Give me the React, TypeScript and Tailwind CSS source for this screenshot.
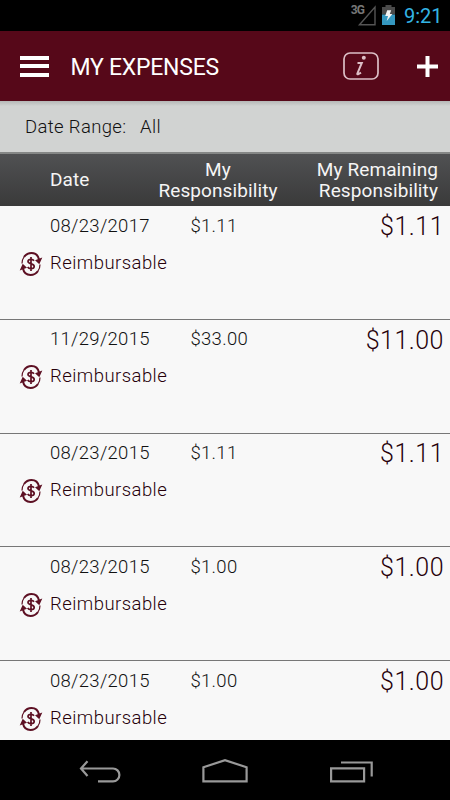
import React from "react";

const expenses = [
  { date: "08/23/2017", mine: "$1.11", remaining: "$1.11" },
  { date: "11/29/2015", mine: "$33.00", remaining: "$11.00" },
  { date: "08/23/2015", mine: "$1.11", remaining: "$1.11" },
  { date: "08/23/2015", mine: "$1.00", remaining: "$1.00" },
  { date: "08/23/2015", mine: "$1.00", remaining: "$1.00" },
];

function StatusBar() {
  return (
    <div className="flex h-[31px] shrink-0 items-start justify-end bg-black">
      <span className="mt-[5px] text-[12px] leading-[11px] font-bold tracking-[-0.9px] text-[#777]">3G</span>
      <svg className="-ml-[7px] mt-[4px] h-[22px] w-[20px]" viewBox="0 0 20 22" fill="none" stroke="#555" strokeWidth="1.4">
        <path d="M2.5 20.7 18 3v17.700z" />
      </svg>
      <svg className="ml-[5px] mt-[5px] h-[21px] w-[13px]" viewBox="0 0 13 21">
        <path d="M3.5 0h6v2H13v7.500H0V2h3.500z" fill="#4a4a4a" />
        <path d="M0 9.500h13V20H0z" fill="#3497bf" />
        <path d="M5.200 5.200h4L7.800 9h2.600L4.700 16l1.300-5H3.200z" fill="#f4f4f4" />
      </svg>
      <span className="ml-[9px] mr-[8px] mt-[4px] w-[38px] whitespace-nowrap text-[20px] leading-[24px] text-[#33b5e5]">9:21</span>
    </div>
  );
}

function RefundIcon() {
  return (
    <svg className="h-[26px] w-[24px]" viewBox="0 0 24 26" fill="none" stroke="#5d1023">
      <path d="M5 6C7 3.200 9.500 2 12.500 2c4 0 6.700 2.500 7.500 6.500" strokeWidth="2" />
      <path d="M5 6C3.500 8 3 10 3 12.500" strokeWidth="1.200" />
      <path d="M19 20c-2 2.800-4.500 4-7.500 4-4 0-6.700-2.500-7.500-6.500" strokeWidth="2" />
      <path d="M19 20c1.500-2 2-4 2-6.500" strokeWidth="1.200" />
      <path d="m16 9.300 7.300-2.800-3 6.700zM8 16.700.7 19.500l3-6.700z" fill="#5d1023" stroke="none" />
      <path d="M15 9.800c-.6-1-1.700-1.500-3-1.500-1.800 0-3 .9-3 2.200 0 3 6.200 1.700 6.200 4.800 0 1.400-1.300 2.400-3.200 2.400-1.500 0-2.700-.6-3.300-1.700M12 6v14" strokeWidth="1.700" />
    </svg>
  );
}

function ExpenseRow({ date, mine, remaining }: (typeof expenses)[number]) {
  return (
    <div className="h-[113.75px] shrink-0 border-b border-[#777]">
      <div className="flex h-[41px] items-center text-[18.500px] font-[350] tracking-[0.3px] text-[#111]">
        <span className="ml-[50px] w-[140.500px]">{date}</span>
        <span>{mine}</span>
        <span className="ml-auto mr-[6px] text-[25px] tracking-[0.5px] text-[#26000a]">{remaining}</span>
      </div>
      <div className="flex h-[33px] items-center">
        <div className="ml-[19px]"><RefundIcon /></div>
        <span className="ml-[7px] text-[18.500px] font-[350] tracking-[0.45px] text-[#26000a]">Reimbursable</span>
      </div>
    </div>
  );
}

function NavigationBar() {
  return (
    <div className="flex h-[60px] shrink-0 items-center bg-black pl-[78px]">
      <svg className="h-[28px] w-[44px]" viewBox="0 0 44 28" fill="none" stroke="#999" strokeWidth="2.200">
        <path d="M2.500 12.500H35a6.400 6.400 0 0 1 0 12.800H20M9.500 5.200 3 12.500 9.500 20" />
      </svg>
      <svg className="ml-[79px] h-[28px] w-[48px]" viewBox="0 0 48 28" fill="none" stroke="#999" strokeWidth="2.200">
        <path d="M2.400 11.300 24 4.200l21.600 7.100v14H2.400z" />
      </svg>
      <svg className="ml-[80px] h-[28px] w-[46px]" viewBox="0 0 46 28" fill="none" stroke="#999" strokeWidth="2.200">
        <path d="M2.100 12.400h33v12.900h-33zM12 6.500h30.700V20.500" />
      </svg>
    </div>
  );
}

export default function App() {
  return (
    <div className="flex h-[800px] w-[450px] flex-col overflow-hidden bg-[#f8f8f8] font-['Roboto',sans-serif]">
      <StatusBar />
      <header className="flex h-[70px] shrink-0 items-center bg-[#560819]">
        <div className="ml-5 flex w-[29px] flex-col gap-[4.500px]">
          <div className="h-[4px] bg-white" />
          <div className="h-[4px] bg-white" />
          <div className="h-[4px] bg-white" />
        </div>
        <h1 className="ml-[21.500px] mt-[4px] text-[23px] tracking-[-0.25px] text-white">MY EXPENSES</h1>
        <svg className="ml-auto h-[30px] w-[38px]" viewBox="0 0 38 30" fill="none" stroke="#dcbfc6">
          <rect x="2" y="2" width="34" height="26" rx="6" strokeWidth="1.700" />
          <path d="M15.500 12h4.300l-4.500 10.700q-.3 1.500 3.700-1" strokeWidth="2" />
          <circle cx="21.800" cy="6.700" r="2" fill="#dcbfc6" stroke="none" />
        </svg>
        <svg className="ml-[36px] mr-[11px] h-[23px] w-[23px]" viewBox="0 0 23 23" stroke="white" strokeWidth="4">
          <path d="M1 11.500h21M11.500 1v21" />
        </svg>
      </header>
      <div className="flex h-[51px] shrink-0 items-center bg-[#d1d3d2] bg-linear-to-b from-[#b5b7b6] from-0% to-[#d1d3d2] to-10% pl-[25px] pt-[2px] text-[18.500px] font-[350] tracking-[0.35px] text-[#111]">
        <span className="w-[115px]">Date Range:</span>
        <span>All</span>
      </div>
      <div className="flex h-[54px] shrink-0 items-center border-t-2 border-[#858786] bg-linear-to-b from-[#505153] to-[#3a3a3a] text-[19px] leading-[21.500px] tracking-[0.1px] text-[#f5f5f5]">
        <span className="ml-[50px] w-[100px]">Date</span>
        <span className="w-[136px] text-center">My<br />Responsibility</span>
        <span className="ml-auto mr-[12px] whitespace-nowrap text-right">My Remaining<br />Responsibility</span>
      </div>
      <main className="flex min-h-0 grow flex-col overflow-hidden">
        {expenses.map((expense, index) => <ExpenseRow key={index} {...expense} />)}
      </main>
      <NavigationBar />
    </div>
  );
}
